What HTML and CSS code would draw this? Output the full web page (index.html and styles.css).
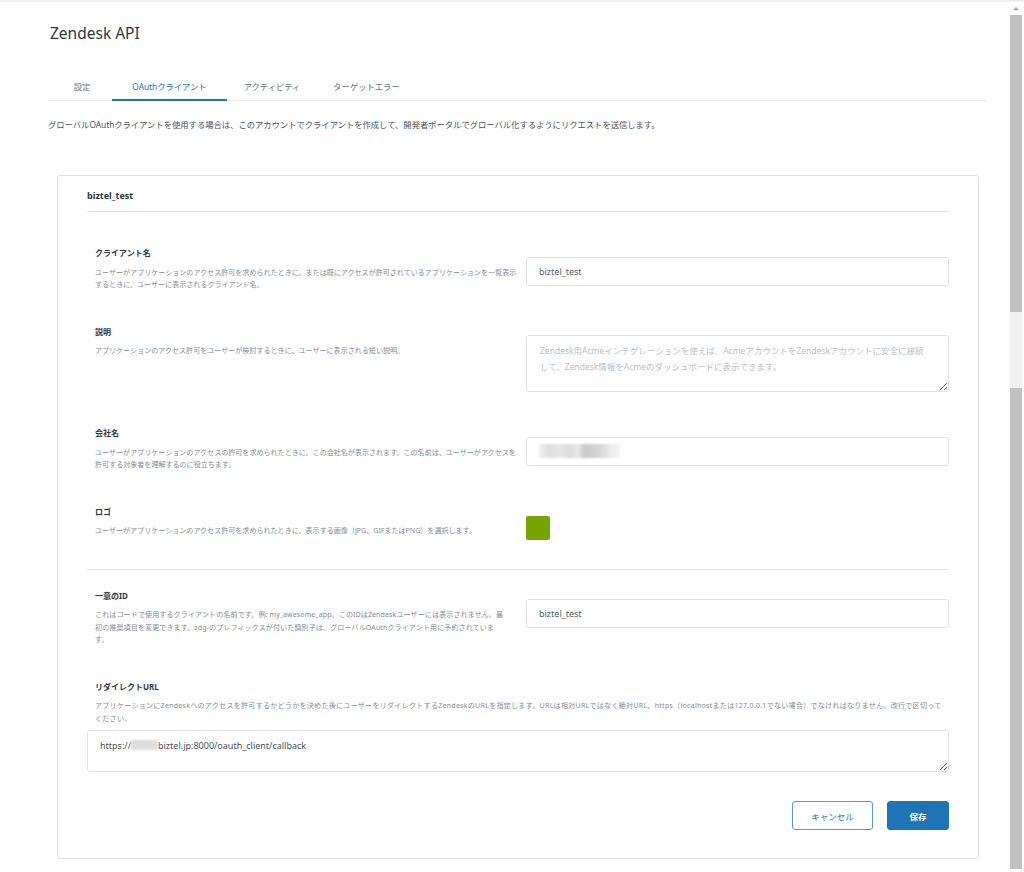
FILE: index.html
```html
<!DOCTYPE html>
<html lang="ja">
<head>
<meta charset="utf-8">
<title>Zendesk API</title>
<link rel="stylesheet" href="styles.css">
</head>
<body>
<div class="window">
  <main class="main">
    <h1 class="title">Zendesk API</h1>
    <nav class="tabs">
      <span class="tab tab--w60">設定</span>
      <span class="tab tab--w115 tab--active">OAuthクライアント</span>
      <span class="tab tab--w90">アクティビティ</span>
      <span class="tab tab--w99">ターゲットエラー</span>
    </nav>
    <p class="intro">グローバルOAuthクライアントを使用する場合は、このアカウントでクライアントを作成して、開発者ポータルでグローバル化するようにリクエストを送信します。</p>

    <section class="card">
      <div class="card-header">biztel_test</div>

      <div class="fields">
        <div class="field">
          <div class="field-text">
            <div class="label">クライアント名</div>
            <div class="desc">ユーザーがアプリケーションのアクセス許可を求められたときに、または既にアクセスが許可されているアプリケーションを一覧表示するときに、ユーザーに表示されるクライアント名。</div>
          </div>
          <div class="field-control"><input class="input" type="text" value="biztel_test"></div>
        </div>

        <div class="field">
          <div class="field-text">
            <div class="label">説明</div>
            <div class="desc">アプリケーションのアクセス許可をユーザーが検討するときに、ユーザーに表示される短い説明。</div>
          </div>
          <div class="field-control"><textarea class="textarea textarea--desc" placeholder="Zendesk用Acmeインテグレーションを使えば、AcmeアカウントをZendeskアカウントに安全に接続&#10;して、Zendesk情報をAcmeのダッシュボードに表示できます。"></textarea></div>
        </div>

        <div class="field">
          <div class="field-text">
            <div class="label">会社名</div>
            <div class="desc">ユーザーがアプリケーションのアクセスの許可を求められたときに、この会社名が表示されます。この名前は、ユーザーがアクセスを許可する対象者を理解するのに役立ちます。</div>
          </div>
          <div class="field-control"><div class="input input--blurred"><span class="blur-company"></span></div></div>
        </div>

        <div class="field field--logo">
          <div class="field-text">
            <div class="label">ロゴ</div>
            <div class="desc">ユーザーがアプリケーションのアクセス許可を求められたときに、表示する画像（JPG、GIFまたはPNG）を選択します。</div>
          </div>
          <div class="field-control"><div class="logo"></div></div>
        </div>

        <hr class="divider">

        <div class="field field--after-divider">
          <div class="field-text">
            <div class="label">一意のID</div>
            <div class="desc desc--mixed">これはコードで使用するクライアントの名前です。例: my_awesome_app。このIDはZendeskユーザーには表示されません。最<br>初の推奨項目を変更できます。zdg-のプレフィックスが付いた識別子は、グローバルOAuthクライアント用に予約されていま<br>す。</div>
          </div>
          <div class="field-control"><input class="input" type="text" value="biztel_test"></div>
        </div>

        <div class="field-full">
          <div class="label label--indent">リダイレクトURL</div>
          <div class="desc desc--indent desc--wide">アプリケーションにZendeskへのアクセスを許可するかどうかを決めた後にユーザーをリダイレクトするZendeskのURLを指定します。URLは相対URLではなく絶対URL、https（localhostまたは127.0.0.1でない場合）でなければなりません。改行で区切って<br>ください。</div>
          <div class="textarea textarea--url">https://<span class="blur-host"></span>biztel.jp:8000/oauth_client/callback</div>
        </div>
      </div>

      <div class="actions">
        <button class="btn btn--secondary" type="button">キャンセル</button>
        <button class="btn btn--primary" type="button">保存</button>
      </div>
    </section>
  </main>
  <div class="scrollbar">
    <div class="scroll-arrow"></div>
    <div class="scroll-thumb scroll-thumb--top"></div>
    <div class="scroll-gap"></div>
    <div class="scroll-thumb scroll-thumb--bottom"></div>
  </div>
</div>
</body>
</html>
```

FILE: styles.css
```css
* { box-sizing: border-box; }

html, body {
  margin: 0;
  padding: 0;
  background: #fff;
  overflow: hidden;
}

body {
  font-family: "Noto Sans", "Noto Sans CJK JP", sans-serif;
  color: #2f3941;
}

.window {
  display: flex;
  width: 1024px;
  height: 872px;
  border-top: 2px solid #efefef;
}

.main {
  flex: 1;
  padding: 0 21px 0 48px;
}

.title {
  margin: 21px 0 0 2px;
  font-size: 15.5px;
  line-height: 20px;
  font-weight: 400;
  color: #2f3941;
}

.tabs {
  display: flex;
  margin-top: 38px;
  padding-left: 4px;
  border-bottom: 1px solid #e9ebed;
}

.tab {
  font-size: 8.3px;
  line-height: 12px;
  color: #68737d;
  text-align: center;
  padding-bottom: 6px;
  border-bottom: 2px solid transparent;
  margin-bottom: -1px;
}

.tab--w60 { width: 60px; }
.tab--w115 { width: 115px; }
.tab--w90 { width: 90px; }
.tab--w99 { width: 99px; }

.tab--active {
  color: #1f73b7;
  border-bottom-color: #1f73b7;
}

.intro {
  margin: 18px 0 0 0;
  font-size: 8.3px;
  line-height: 12px;
  color: #49545c;
}

.card {
  margin: 44px 8px 0 9px;
  border: 1px solid #dfe1e3;
  border-radius: 3px;
  padding: 14px 29px 28px 29px;
}

.card-header {
  font-size: 9px;
  line-height: 12px;
  font-weight: 700;
  color: #2f3941;
  padding-bottom: 9px;
  border-bottom: 1px solid #e3e5e7;
}

.fields {
  display: flex;
  flex-direction: column;
  gap: 35px;
  margin-top: 35px;
}

.field {
  display: grid;
  grid-template-columns: 423px 423px;
  column-gap: 8px;
  padding-left: 8px;
  align-items: start;
}

.label {
  font-size: 8px;
  line-height: 12px;
  font-weight: 700;
  color: #2f3941;
}

.desc {
  margin-top: 6.5px;
  font-size: 7.05px;
  line-height: 12.5px;
  color: #848d96;
}

.desc--wide {
  letter-spacing: 0.26px;
}

.desc--mixed {
  letter-spacing: 0.1px;
}

.label--indent,
.desc--indent {
  padding-left: 8px;
}

.field-control {
  padding-top: 9.5px;
}

.input {
  display: flex;
  align-items: center;
  width: 423px;
  height: 29px;
  border: 1px solid #e1e4e6;
  border-radius: 3px;
  padding: 0 12px;
  font-family: "Noto Sans", "Noto Sans CJK JP", sans-serif;
  font-size: 9px;
  color: #555f66;
  background: #fff;
  outline: none;
}

.blur-company {
  display: inline-block;
  width: 81px;
  height: 14px;
  background: linear-gradient(90deg, #f1f1f1 0%, #dedede 12%, #e6e6e6 25%, #dcdcdc 38%, #eaeaea 48%, #c9c9c9 56%, #cfcfcf 66%, #d7d7d7 76%, #ececec 88%, #f3f3f3 100%);
  filter: blur(1.2px);
}

.textarea {
  display: block;
  width: 423px;
  height: 57px;
  border: 1px solid #e1e4e6;
  border-radius: 3px;
  padding: 8px 12px;
  font-family: "Noto Sans", "Noto Sans CJK JP", sans-serif;
  font-size: 9px;
  line-height: 15px;
  color: #555f66;
  background: #fff;
  resize: vertical;
  overflow: auto;
  outline: none;
}

.textarea--desc {
  font-size: 8.5px;
  line-height: 16px;
  padding: 7px 10px 7px 13px;
}

.textarea::placeholder {
  color: #b9c0c5;
}

.field--logo .field-control {
  padding-top: 10px;
}

.logo {
  width: 24px;
  height: 24px;
  border-radius: 2px;
  background: #78a300;
}

.divider {
  margin: -6px 0 -15px 0;
  border: 0;
  border-top: 1px solid #e3e5e7;
  height: 0;
}

.field-full .desc {
  margin-top: 6.5px;
}

.textarea--url {
  width: 100%;
  height: 42px;
  margin-top: 5.5px;
  padding: 7px 12px;
  color: #49545c;
}

.blur-host {
  display: inline-block;
  width: 27px;
  height: 10px;
  vertical-align: -1px;
  background: #dcdcdc;
  filter: blur(1.2px);
}

.actions {
  display: flex;
  justify-content: flex-end;
  gap: 14px;
  margin-top: 29.5px;
}

.btn {
  height: 29px;
  border-radius: 3px;
  font-family: "Noto Sans", "Noto Sans CJK JP", sans-serif;
  font-size: 8.5px;
  padding: 0;
  cursor: pointer;
}

.btn--secondary {
  width: 81px;
  background: #fff;
  border: 1px solid #5a98cc;
  color: #1f73b7;
}

.btn--primary {
  width: 62px;
  background: #1f73b7;
  border: 1px solid #1f73b7;
  color: #fff;
  font-weight: 700;
}

.scrollbar {
  width: 16px;
  display: flex;
  flex-direction: column;
  align-items: center;
  padding: 5px 2px 3px 2px;
}

.scroll-arrow {
  width: 0;
  height: 0;
  border-left: 3px solid transparent;
  border-right: 3px solid transparent;
  border-bottom: 3px solid #a5a5a5;
  margin-bottom: 5px;
}

.scroll-thumb {
  width: 12px;
  background: #c1c1c1;
}

.scroll-thumb--top {
  height: 297px;
}

.scroll-gap {
  width: 12px;
  height: 76px;
  background: #f1f1f1;
}

.scroll-thumb--bottom {
  flex: 1;
}
```
